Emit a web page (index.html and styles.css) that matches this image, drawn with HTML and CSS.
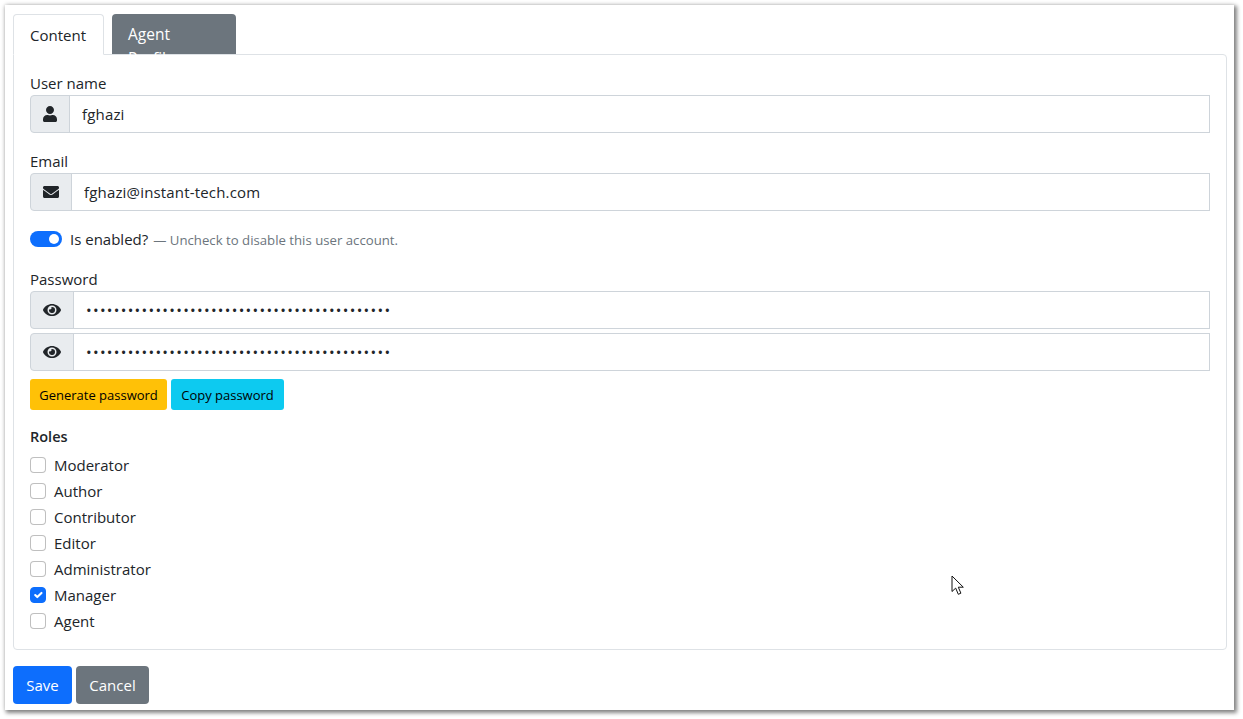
FILE: index.html
```html
<!DOCTYPE html>
<html lang="en">
<head>
<meta charset="utf-8">
<title>User</title>
<link rel="stylesheet" href="styles.css">
</head>
<body>
<div class="window">
  <div class="tabs">
    <div class="tab tab-active">Content</div>
    <div class="tab tab-dark">Agent Profile</div>
  </div>
  <div class="card">
    <div class="label">User name</div>
    <div class="group mb">
      <span class="addon"><svg class="icon w14" viewBox="0 0 448 512"><path d="M224 256c70.7 0 128-57.3 128-128S294.7 0 224 0 96 57.3 96 128s57.3 128 128 128zm89.6 32h-16.7c-22.2 10.2-46.9 16-72.9 16s-50.6-5.8-72.9-16h-16.7C60.2 288 0 348.2 0 422.4V464c0 26.5 21.5 48 48 48h352c26.5 0 48-21.5 48-48v-41.6c0-74.2-60.2-134.4-134.4-134.4z"/></svg></span>
      <input class="field" type="text" value="fghazi">
    </div>
    <div class="label">Email</div>
    <div class="group mb">
      <span class="addon"><svg class="icon w16" viewBox="0 0 512 512"><path d="M502.3 190.8c3.9-3.1 9.7-.2 9.7 4.7V400c0 26.5-21.5 48-48 48H48c-26.5 0-48-21.5-48-48V195.6c0-5 5.7-7.8 9.7-4.7 22.4 17.4 52.1 39.5 154.1 113.6 21.1 15.4 56.7 47.8 92.2 47.6 35.7.3 72-32.8 92.3-47.6 102-74.1 131.6-96.3 154-113.7zM256 320c23.2.4 56.6-29.2 73.4-41.4 132.7-96.3 142.8-104.7 173.4-128.7 5.8-4.5 9.2-11.5 9.2-18.9v-19c0-26.5-21.5-48-48-48H48C21.5 64 0 85.5 0 112v19c0 7.4 3.4 14.3 9.2 18.9 30.6 23.9 40.7 32.4 173.4 128.7 16.8 12.2 50.2 41.8 73.4 41.4z"/></svg></span>
      <input class="field" type="text" value="fghazi@instant-tech.com">
    </div>
    <div class="switch-row mb">
      <span class="switch"><span class="knob"></span></span>
      <span class="switch-label">Is enabled?</span>
      <small class="hint"><span class="dash">—</span> Uncheck to disable this user account.</small>
    </div>
    <div class="label">Password</div>
    <div class="group gap4">
      <span class="addon"><svg class="icon w18" viewBox="0 0 576 512"><path d="M572.52 241.4C518.29 135.59 410.93 64 288 64S57.68 135.64 3.48 241.41a32.35 32.35 0 0 0 0 29.19C57.71 376.41 165.07 448 288 448s230.32-71.64 284.52-177.41a32.35 32.35 0 0 0 0-29.19zM288 400a144 144 0 1 1 144-144 143.93 143.93 0 0 1-144 144zm0-240a95.31 95.31 0 0 0-25.31 3.79 47.85 47.85 0 0 1-66.9 66.9A95.78 95.78 0 1 0 288 160z"/></svg></span>
      <input class="field pw" type="password" value="aaaaaaaaaaaaaaaaaaaaaaaaaaaaaaaaaaaaaaaaaaaa">
    </div>
    <div class="group gap8">
      <span class="addon"><svg class="icon w18" viewBox="0 0 576 512"><path d="M572.52 241.4C518.29 135.59 410.93 64 288 64S57.68 135.64 3.48 241.41a32.35 32.35 0 0 0 0 29.19C57.71 376.41 165.07 448 288 448s230.32-71.64 284.52-177.41a32.35 32.35 0 0 0 0-29.19zM288 400a144 144 0 1 1 144-144 143.93 143.93 0 0 1-144 144zm0-240a95.31 95.31 0 0 0-25.31 3.79 47.85 47.85 0 0 1-66.9 66.9A95.78 95.78 0 1 0 288 160z"/></svg></span>
      <input class="field pw" type="password" value="aaaaaaaaaaaaaaaaaaaaaaaaaaaaaaaaaaaaaaaaaaaa">
    </div>
    <div class="btn-row mb">
      <button class="btn-sm btn-warning" type="button">Generate password</button>
      <button class="btn-sm btn-info" type="button">Copy password</button>
    </div>
    <div class="roles-title">Roles</div>
    <div class="role"><span class="check"></span>Moderator</div>
    <div class="role"><span class="check"></span>Author</div>
    <div class="role"><span class="check"></span>Contributor</div>
    <div class="role"><span class="check"></span>Editor</div>
    <div class="role"><span class="check"></span>Administrator</div>
    <div class="role"><span class="check checked"><svg class="tick" viewBox="0 0 20 20"><path d="M6 10l3 3 6-6" fill="none" stroke="#fff" stroke-width="3" stroke-linecap="round" stroke-linejoin="round"/></svg></span>Manager</div>
    <div class="role"><span class="check"></span>Agent</div>
  </div>
  <div class="actions">
    <button class="btn btn-primary" type="button">Save</button>
    <button class="btn btn-secondary" type="button">Cancel</button>
  </div>
  <svg class="cursor" viewBox="0 0 14 21"><path d="M1 1v15.5l3.7-3.4 2.6 6.2 2.6-1.1-2.6-6h5z" fill="#fff" stroke="#111" stroke-width="1" stroke-linejoin="miter"/></svg>
</div>
</body>
</html>
```
FILE: styles.css
```css
* { box-sizing: border-box; }
html, body { margin: 0; padding: 0; background: #fff; }
body {
  width: 1243px;
  height: 719px;
  overflow: hidden;
  font-family: "Open Sans", "Noto Sans", sans-serif;
  font-size: 15px;
  line-height: 24px;
  color: #212529;
}
.window {
  position: relative;
  margin: 5px 0 0 5px;
  width: 1229px;
  height: 705px;
  padding: 9px 7px 0 8px;
  background: #fff;
  box-shadow: 2px 2px 4px 1px rgba(0,0,0,.45), 0 0 5px rgba(0,0,0,.15);
}
.tabs { display: flex; gap: 8px; height: 41px; }
.tab {
  height: 41px;
  padding: 8px 16px;
  border-radius: 4px 4px 0 0;
  border: 1px solid transparent;
}
.tab-active {
  width: 91px;
  border-color: #dee2e6 #dee2e6 #fff;
  position: relative;
  z-index: 1;
  background: #fff;
}
.tab-dark {
  width: 124px;
  height: 40px;
  background: #6c757d;
  color: #fff;
  padding: 7px 15px;
  font-size: 15.5px;
}
.card {
  margin-top: -1px;
  height: 596px;
  padding: 16px;
  border: 1px solid #dee2e6;
  border-radius: 0 4px 4px 4px;
}
.label { height: 24px; }
.group { display: flex; height: 38px; }
.mb { margin-bottom: 16px; }
.gap4 { margin-bottom: 4px; }
.gap8 { margin-bottom: 8px; }
.addon {
  display: flex;
  align-items: center;
  padding: 0 12px;
  background: #e9ecef;
  border: 1px solid #ced4da;
  border-radius: 4px 0 0 4px;
}
.icon { height: 16px; fill: #212529; display: block; }
.w14 { width: 14px; }
.w16 { width: 16px; }
.w18 { width: 18px; }
.field {
  flex: 1;
  min-width: 0;
  margin-left: -1px;
  padding: 0 12px;
  height: 38px;
  border: 1px solid #ced4da;
  border-radius: 0;
  font: inherit;
  letter-spacing: .17px;
  color: #212529;
  background: #fff;
  outline: none;
}
.pw { letter-spacing: 1.3px; }
.switch-row { display: flex; align-items: center; height: 24px; }
.switch {
  width: 32px;
  height: 16px;
  border-radius: 8px;
  background: #0d6efd;
  display: flex;
  justify-content: flex-end;
  align-items: center;
  padding-right: 3px;
  margin-right: 8px;
}
.knob { width: 10px; height: 10px; border-radius: 50%; background: #fff; }
.switch-label { margin-right: 5px; }
.hint { font-size: 13.2px; color: #6c757d; padding-top: 1px; }
.dash { color: #6c757d; }
.btn-row { display: flex; gap: 4px; }
.btn-sm {
  height: 31px;
  padding: 0;
  border: 0;
  border-radius: 3px;
  font: inherit;
  font-size: 13px;
  white-space: nowrap;
  color: #000;
}
.btn-warning { background: #ffc107; width: 137px; }
.btn-info { background: #0dcaf0; width: 113px; }
.roles-title { font-weight: 600; font-size: 14.5px; height: 26px; line-height: 22px; }
.role { display: flex; align-items: center; height: 26px; }
.check {
  width: 16px;
  height: 16px;
  margin-right: 8px;
  border: 1px solid rgba(0,0,0,.25);
  border-radius: 4px;
  background: #fff;
  flex: none;
}
.checked { background: #0d6efd; border-color: #0d6efd; }
.tick { display: block; width: 14px; height: 14px; }
.actions { display: flex; gap: 4px; margin-top: 16px; }
.btn {
  height: 38px;
  border: 0;
  border-radius: 4px;
  padding: 0;
  font: inherit;
  color: #fff;
}
.btn-primary { background: #0d6efd; width: 59px; }
.btn-secondary { background: #6c757d; width: 73px; }
.cursor { position: absolute; left: 946px; top: 570px; width: 14px; height: 21px; }
```
